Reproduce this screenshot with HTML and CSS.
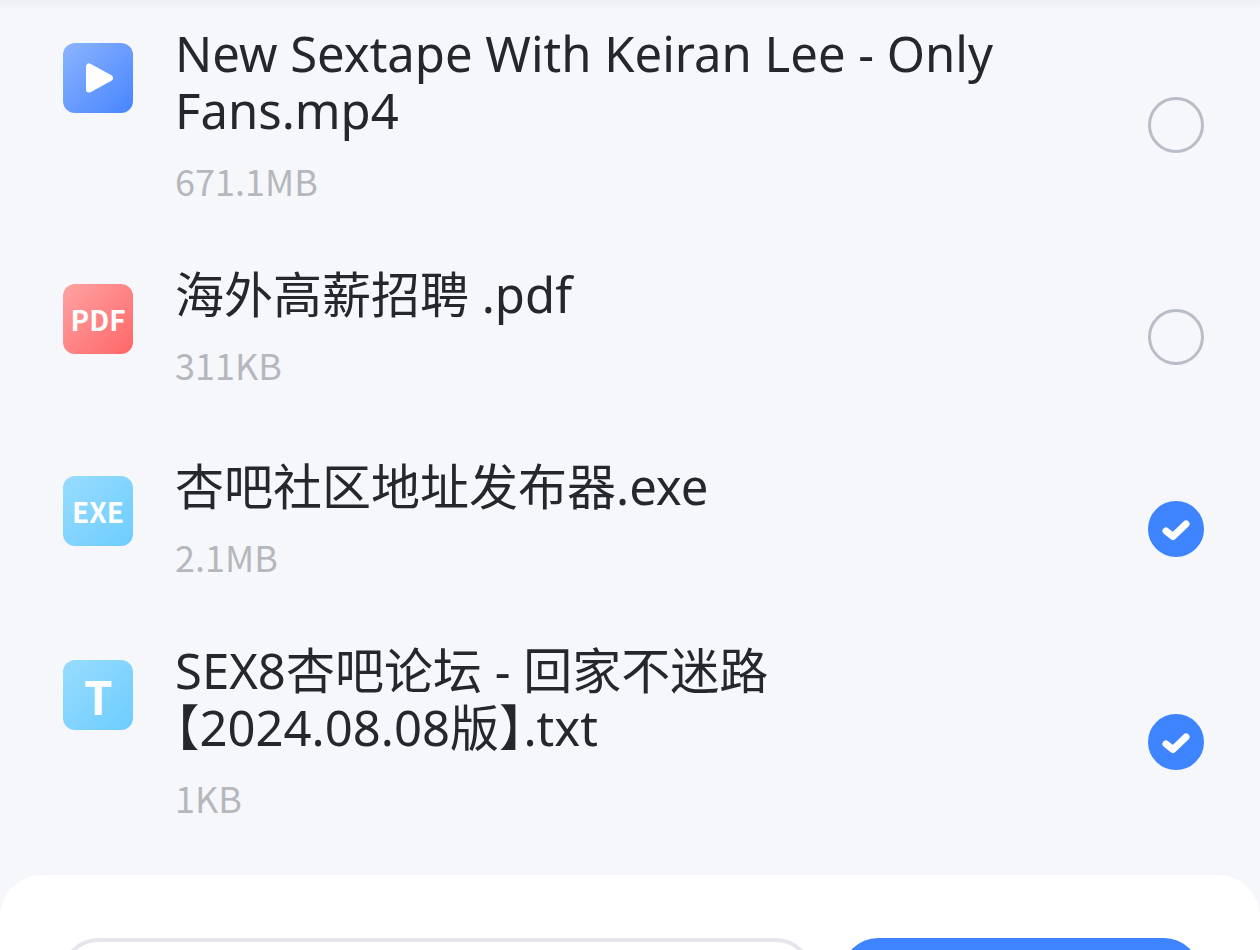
FILE: index.html
```html
<!DOCTYPE html>
<html lang="zh-CN">
<head>
<meta charset="utf-8">
<meta name="viewport" content="width=device-width, initial-scale=1">
<title>文件列表</title>
<link rel="stylesheet" href="styles.css">
</head>
<body>
<div class="app">
  <ul class="files">
    <li class="row">
      <label class="file" for="f1">
        <span class="badge badge-video"><svg viewBox="0 0 70 70" aria-hidden="true"><path d="M26 23.500v23L47 35z" fill="#fff" stroke="#fff" stroke-width="6" stroke-linejoin="round"/></svg></span>
        <span class="info"><span class="name">New Sextape With Keiran Lee - Only Fans.mp4</span><span class="size">671.1MB</span></span>
      </label>
      <span class="tick"><input type="checkbox" id="f1"><svg viewBox="0 0 56 56" aria-hidden="true"><path d="M18 30l7 5.500L38 23"/></svg></span>
    </li>
    <li class="row">
      <label class="file" for="f2">
        <span class="badge badge-pdf">PDF</span>
        <span class="info"><span class="name">海外高薪招聘 .pdf</span><span class="size">311KB</span></span>
      </label>
      <span class="tick"><input type="checkbox" id="f2"><svg viewBox="0 0 56 56" aria-hidden="true"><path d="M18 30l7 5.500L38 23"/></svg></span>
    </li>
    <li class="row">
      <label class="file" for="f3">
        <span class="badge badge-sky">EXE</span>
        <span class="info"><span class="name">杏吧社区地址发布器.exe</span><span class="size">2.1MB</span></span>
      </label>
      <span class="tick"><input type="checkbox" id="f3" checked><svg viewBox="0 0 56 56" aria-hidden="true"><path d="M18 30l7 5.500L38 23"/></svg></span>
    </li>
    <li class="row">
      <label class="file" for="f4">
        <span class="badge badge-sky badge-letter">T</span>
        <span class="info"><span class="name">SEX8杏吧论坛 - 回家不迷路【2024.08.08版】.txt</span><span class="size">1KB</span></span>
      </label>
      <span class="tick"><input type="checkbox" id="f4" checked><svg viewBox="0 0 56 56" aria-hidden="true"><path d="M18 30l7 5.500L38 23"/></svg></span>
    </li>
  </ul>
  <footer class="sheet">
    <button class="btn btn-outline" type="button" aria-label="选择位置"></button>
    <button class="btn btn-primary" type="button" aria-label="保存"></button>
  </footer>
</div>
</body>
</html>
```
FILE: styles.css
```css
* { box-sizing: border-box; }

body {
  margin: 0;
  background: #f5f7fb;
  color: #25272b;
  font-family: "Noto Sans", "Noto Sans CJK SC", sans-serif;
}

.app {
  display: flex;
  flex-direction: column;
  height: 100vh;
  overflow: hidden;
  background: linear-gradient(#edeff3, #f5f7fb 10px);
}

.files {
  flex: none;
  margin: 0;
  padding: 8px 0 17px;
  list-style: none;
}

.row {
  display: flex;
  align-items: center;
  gap: 108px;
  min-height: 192px;
  padding: 0 56px 0 63px;
}

.file {
  display: flex;
  flex: 1;
  align-items: flex-start;
  gap: 42px;
  min-width: 0;
  padding: 17px 0 38px;
}

.badge {
  display: flex;
  flex: none;
  align-items: center;
  justify-content: center;
  width: 70px;
  height: 70px;
  margin-top: 18px;
  border-radius: 12px;
  color: #fff;
  font-family: "Noto Sans CJK SC", sans-serif;
  font-size: 28px;
  font-weight: 700;
  line-height: 68px;
}

.badge svg { width: 70px; height: 70px; }
.badge-video { background: linear-gradient(135deg, #8db4ff, #4785ff); }
.badge-pdf { background: linear-gradient(135deg, #ffa3a3, #ff6668); }
.badge-sky { background: linear-gradient(135deg, #98dcff, #6dcdff); }
.badge-letter { font-size: 46px; }

.info {
  display: flex;
  flex: 1;
  flex-direction: column;
  gap: 18px;
  min-width: 0;
}

.name {
  font-size: 49px;
  line-height: 57px;
  font-feature-settings: "halt";
}

.size {
  color: #b5b7bc;
  font-family: "Noto Sans CJK SC", sans-serif;
  font-size: 36px;
  line-height: 46px;
}

.tick {
  display: grid;
  flex: none;
  width: 56px;
  height: 56px;
}

.tick input,
.tick svg {
  grid-area: 1 / 1;
  width: 56px;
  height: 56px;
  margin: 0;
}

.tick input {
  appearance: none;
  border: 3px solid #b9bdc7;
  border-radius: 50%;
}

.tick input:checked {
  border-color: #3f84ff;
  background: #3f84ff;
}

.tick svg {
  visibility: hidden;
  pointer-events: none;
  fill: none;
  stroke: #fff;
  stroke-width: 7;
  stroke-linecap: round;
  stroke-linejoin: round;
}

.tick input:checked + svg { visibility: visible; }

.sheet {
  display: flex;
  flex: none;
  gap: 30px;
  padding: 63px 60px 60px 62px;
  border-radius: 42px 42px 0 0;
  background: #fff;
}

.btn {
  height: 120px;
  border: 0;
  border-radius: 36px;
}

.btn-outline {
  flex: 19;
  border: 4px solid #e5e6ec;
  background: #fff;
}

.btn-primary {
  flex: 9;
  background: #3f84ff;
}
```
